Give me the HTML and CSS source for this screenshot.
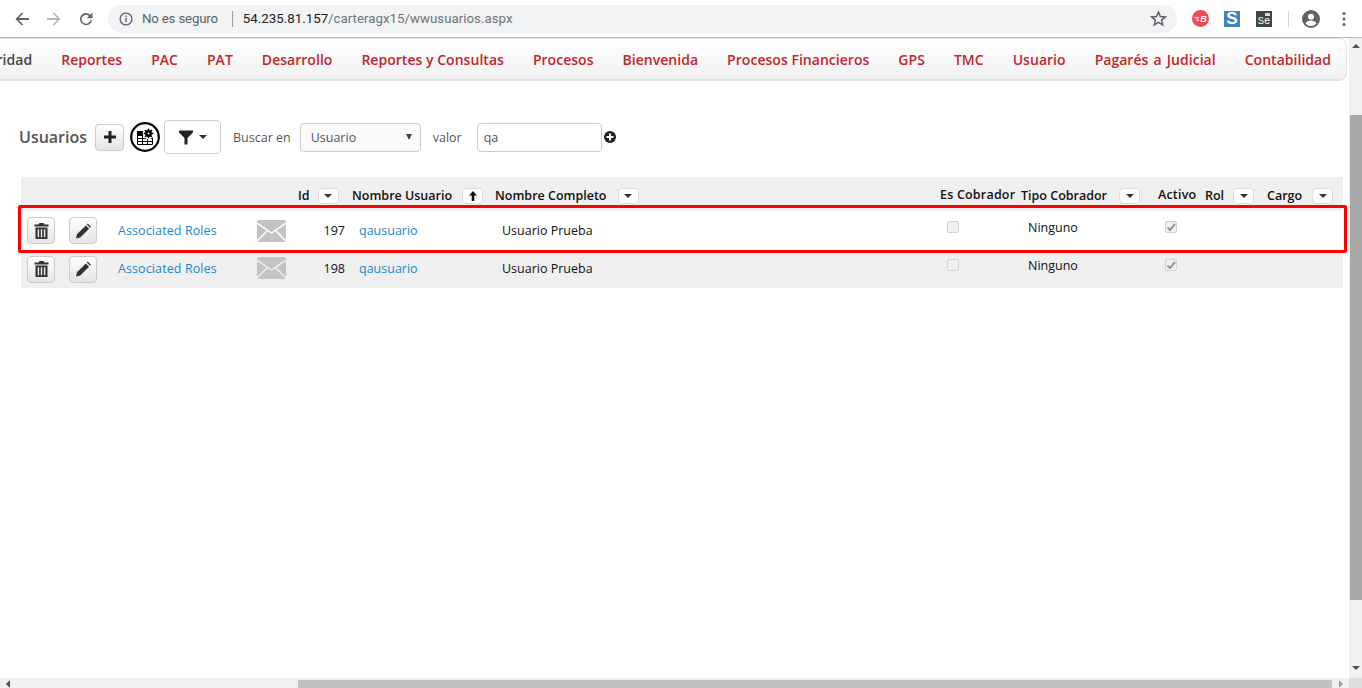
FILE: index.html
```html
<!DOCTYPE html>
<html lang="en">
<head>
  <meta charset="UTF-8" />
  <title>Usuarios</title>
  <link rel="stylesheet" href="styles.css">
</head>
<body>
  <header class="browser">
    <svg class="tool" viewBox="0 0 16 16"><path d="M15 7H4.800l4.400-4.400L8 1.400 1.400 8 8 14.600l1.200-1.200L4.800 9H15z" fill="#5f6368"/></svg>
    <svg class="tool" viewBox="0 0 16 16"><path d="M1 7h10.200L6.800 2.600 8 1.400 14.600 8 8 14.600l-1.200-1.200L11.200 9H1z" fill="#b4b6b9"/></svg>
    <svg class="tool" viewBox="0 0 16 16"><path d="M14.500 1.500v5.800H8.700l2.300-2.300A4.400 4.400 0 1 0 12.300 9.300h1.800A6.100 6.100 0 1 1 12.300 3.700z" fill="#5f6368"/></svg>
    <div class="omnibox">
      <svg class="info" viewBox="0 0 14 14"><circle cx="7" cy="7" r="5.900" fill="none" stroke="#5f6368" stroke-width="1.300"/><path d="M6.300 6h1.400v4.300H6.300zM6.300 3.500h1.400v1.400H6.300z" fill="#5f6368"/></svg>
      <span class="insecure">No es seguro</span>
      <span class="url"><b>54.235.81.157</b>/carteragx15/wwusuarios.aspx</span>
      <svg class="star" viewBox="0 0 16 16"><path d="M8 1.800l1.800 4.300 4.600.4-3.500 3 1.100 4.500L8 11.600 4 14l1.100-4.500-3.500-3 4.600-.4z" fill="none" stroke="#5f6368" stroke-width="1.400"/></svg>
    </div>
    <span class="ext ext-red"><svg class="wings" viewBox="0 0 6 6"><path d="M0 1h6M1.500 3h4.500M3 5h3" stroke="#fff" stroke-width="1"/></svg>B</span>
    <span class="ext ext-blue">S</span>
    <span class="ext ext-se">Se</span>
    <span class="sep"></span>
    <svg class="avatar" viewBox="0 0 18 18"><circle cx="9" cy="9" r="9" fill="#5f6368"/><circle cx="9" cy="6.800" r="3" fill="#fff"/><path d="M3.500 13.500c1-2.200 3.400-3 5.500-3s4.500.8 5.500 3A7 7 0 0 1 9 16a7 7 0 0 1-5.500-2.500z" fill="#fff"/></svg>
    <svg class="dots" viewBox="0 0 4 16"><circle cx="2" cy="2.500" r="1.500"/><circle cx="2" cy="8" r="1.500"/><circle cx="2" cy="13.500" r="1.500"/></svg>
  </header>

  <div class="viewport">
    <div class="page">
      <nav class="menu">
        <a class="dark">Seguridad</a>
        <a>Reportes</a>
        <a>PAC</a>
        <a>PAT</a>
        <a>Desarrollo</a>
        <a>Reportes y Consultas</a>
        <a>Procesos</a>
        <a>Bienvenida</a>
        <a>Procesos Financieros</a>
        <a>GPS</a>
        <a>TMC</a>
        <a>Usuario</a>
        <a class="wide-words">Pagarés a Judicial</a>
        <a>Contabilidad</a>
      </nav>

      <main class="content">
        <div class="toolbar">
          <h1>Usuarios</h1>
          <button class="btn add-btn" type="button">
            <svg viewBox="0 0 12 12"><path d="M4.500 0h3v4.500H12v3H7.500V12h-3V7.500H0v-3h4.500z" fill="#222"/></svg>
          </button>
          <svg class="grid-icon" viewBox="0 0 30 30">
            <circle cx="15" cy="15" r="13.800" fill="#fff" stroke="#000" stroke-width="2.200"/>
            <path d="M7.500 9.500h15v13h-15zM7.500 13.500h15M7.500 16.500h15M7.500 19.500h15M12.500 13.500v9M17.500 13.500v9" fill="none" stroke="#000" stroke-width="1"/>
            <path d="M7.500 9h9v4.500h-9z" fill="#000"/>
            <circle cx="18.500" cy="11.500" r="5.800" fill="#fff"/>
            <circle cx="18.500" cy="11.500" r="3.400" fill="#000"/>
            <path d="M18.500 6.700v9.600M13.700 11.500h9.600M15.100 8.100l6.800 6.800M21.900 8.100l-6.800 6.800" stroke="#000" stroke-width="1.500"/>
            <circle cx="18.500" cy="11.500" r="1" fill="#fff"/>
          </svg>
          <button class="filter-btn" type="button">
            <svg class="funnel" viewBox="0 0 14 14"><path d="M0 0h14v2L8.500 7.500V14h-3V7.500L0 2z" fill="#222"/></svg>
            <span class="caret"></span>
          </button>
          <label class="lbl buscar">Buscar en</label>
          <div class="select-box">
            <select class="field select-field"><option>Usuario</option></select>
            <span class="select-arrow"></span>
          </div>
          <label class="lbl valor">valor</label>
          <input class="field value-field" type="text" value="qa" />
          <svg class="plus-circle" viewBox="0 0 12 12"><circle cx="6" cy="6" r="6" fill="#222"/><path d="M5 2.500h2V5h2.500v2H7v2.500H5V7H2.500V5H5z" fill="#fff"/></svg>
        </div>

        <div class="grid-wrap">
          <table class="users">
            <colgroup>
              <col class="c1"><col class="c2"><col class="c3"><col class="c4"><col class="c5"><col class="c6">
              <col class="c7"><col class="c8"><col class="c9"><col class="c10"><col class="c11"><col class="c12">
            </colgroup>
            <thead>
              <tr>
                <th></th><th></th><th></th><th></th>
                <th>Id<button class="sort sort-id" type="button"><span class="caret"></span></button></th>
                <th>Nombre Usuario<button class="sort sort-user" type="button"><svg viewBox="0 0 8 10"><path d="M4 0l4 4.500H5.300V10H2.700V4.500H0z" fill="#111"/></svg></button></th>
                <th>Nombre Completo<button class="sort sort-full" type="button"><span class="caret"></span></button></th>
                <th class="raised">Es Cobrador</th>
                <th>Tipo Cobrador<button class="sort sort-tipo" type="button"><span class="caret"></span></button></th>
                <th class="raised">Activo</th>
                <th>Rol<button class="sort sort-rol" type="button"><span class="caret"></span></button></th>
                <th>Cargo<button class="sort sort-cargo" type="button"><span class="caret"></span></button></th>
              </tr>
            </thead>
            <tbody>
              <tr class="row-white">
                <td class="act"><button class="btn" type="button"><svg class="glyph" viewBox="0 0 14 16"><path d="M5 0h4l1 1.500h4v2H0v-2h4zM1 4.500h12V16H1zM3.200 6.200v8h1.400v-8zM6.300 6.200v8h1.400v-8zM9.400 6.200v8h1.400v-8z" fill="#333" fill-rule="evenodd"/></svg></button></td>
                <td class="act"><button class="btn" type="button"><svg class="glyph" viewBox="0 0 16 16"><path d="M0 16l1-4.500L10.500 2l3.500 3.500L4.500 15zM11.500 1l1-1 3.500 3.500-1 1z" fill="#333"/></svg></button></td>
                <td class="mid"><a class="link roles">Associated Roles</a></td>
                <td class="mid"><svg class="mail" viewBox="0 0 29 22"><rect width="29" height="22" rx="2" fill="#c4c2c3"/><path d="M0 3l14.500 10L29 3M0 21l10-10M29 21L19 11" fill="none" stroke="#fff" stroke-width="1.500"/></svg></td>
                <td class="mid num">197</td>
                <td class="mid"><a class="link">qausuario</a></td>
                <td class="mid">Usuario Prueba</td>
                <td class="top"><span class="check"></span></td>
                <td class="top">Ninguno</td>
                <td class="top"><span class="check on"><svg viewBox="0 0 10 10"><path d="M1.500 5.500l2.500 2.500 5-6" fill="none" stroke="#999" stroke-width="2"/></svg></span></td>
                <td></td><td></td>
              </tr>
              <tr class="row-grey">
                <td class="act"><button class="btn" type="button"><svg class="glyph" viewBox="0 0 14 16"><path d="M5 0h4l1 1.500h4v2H0v-2h4zM1 4.500h12V16H1zM3.200 6.200v8h1.400v-8zM6.300 6.200v8h1.400v-8zM9.400 6.200v8h1.400v-8z" fill="#333" fill-rule="evenodd"/></svg></button></td>
                <td class="act"><button class="btn" type="button"><svg class="glyph" viewBox="0 0 16 16"><path d="M0 16l1-4.500L10.500 2l3.500 3.500L4.500 15zM11.500 1l1-1 3.500 3.500-1 1z" fill="#333"/></svg></button></td>
                <td class="mid"><a class="link roles">Associated Roles</a></td>
                <td class="mid"><svg class="mail" viewBox="0 0 29 22"><rect width="29" height="22" rx="2" fill="#c4c2c3"/><path d="M0 3l14.500 10L29 3M0 21l10-10M29 21L19 11" fill="none" stroke="#efefef" stroke-width="1.500"/></svg></td>
                <td class="mid num">198</td>
                <td class="mid"><a class="link">qausuario</a></td>
                <td class="mid">Usuario Prueba</td>
                <td class="top"><span class="check"></span></td>
                <td class="top">Ninguno</td>
                <td class="top"><span class="check on"><svg viewBox="0 0 10 10"><path d="M1.500 5.500l2.500 2.500 5-6" fill="none" stroke="#999" stroke-width="2"/></svg></span></td>
                <td></td><td></td>
              </tr>
            </tbody>
          </table>
          <div class="highlight"></div>
        </div>
      </main>
    </div>

    <div class="vbar">
      <span class="arrow-up"></span>
      <span class="vthumb"></span>
      <span class="arrow-down"></span>
    </div>
    <div class="hbar">
      <span class="arrow-left"></span>
      <span class="hthumb"></span>
      <span class="arrow-right"></span>
    </div>
    <div class="corner"></div>
  </div>
</body>
</html>
```

FILE: styles.css
```css
* {
  box-sizing: border-box;
}
html, body {
  margin: 0;
  height: 688px;
  overflow: hidden;
}
body {
  font-family: "Open Sans", "Liberation Sans", sans-serif;
  font-size: 12.500px;
  color: #222;
  background: #fff;
  display: flex;
  flex-direction: column;
}

/* browser chrome */
.browser {
  height: 38px;
  flex: none;
  display: flex;
  align-items: center;
  padding: 0 0 0 14px;
  border-bottom: 1px solid #b8b8b8;
  background: #fff;
}
.tool {
  width: 16px;
  height: 16px;
  margin-right: 16px;
  flex: none;
}
.tool:nth-child(3) {
  margin-right: 14px;
}
.omnibox {
  width: 1069px;
  height: 28px;
  border-radius: 14px;
  background: #f1f3f4;
  display: flex;
  align-items: center;
  padding: 0 10px 0 11px;
  font-family: "Roboto", sans-serif;
  font-size: 13.300px;
  flex: none;
}
.info {
  width: 14px;
  height: 14px;
  margin-right: 9px;
}
.insecure {
  color: #5f6368;
  padding-right: 14px;
  letter-spacing: -.2px;
  border-right: 1px solid #9a9da1;
  line-height: 16px;
}
.url {
  color: #70757a;
  margin-left: 10px;
  flex: 1;
}
.url b {
  font-weight: 400;
  color: #202124;
}
.star {
  width: 17px;
  height: 17px;
}
.ext {
  width: 16px;
  height: 16px;
  flex: none;
  display: flex;
  align-items: center;
  justify-content: center;
  font-family: "Liberation Sans", sans-serif;
  font-weight: 700;
}
.ext-red {
  margin-left: 15px;
  width: 17px;
  height: 17px;
  border-radius: 50%;
  background: #ea4a50;
  color: #fff;
  font-size: 9px;
  font-style: italic;
  gap: 1px;
}
.wings {
  width: 5px;
  height: 6px;
}
.ext-blue {
  margin-left: 15px;
  background: #3d85c0;
  color: #fff;
  font-size: 17px;
  line-height: 16px;
}
.ext-se {
  position: relative;
  margin-left: 16px;
  background: #444;
  color: #fff;
  font-size: 10.500px;
  padding-top: 4px;
  font-family: "Liberation Mono", monospace;
  font-weight: 400;
}
.ext-se::after {
  content: "";
  position: absolute;
  right: 2px;
  top: 2px;
  width: 5px;
  height: 3px;
  background: #ddd;
}
.sep {
  width: 1px;
  height: 16px;
  background: #d3d5d7;
  margin: 0 13px 0 16px;
}
.avatar {
  width: 18px;
  height: 18px;
  flex: none;
}
.dots {
  width: 4px;
  height: 16px;
  margin-left: 22px;
  fill: #5f6368;
}

/* page frame with scrollbars */
.viewport {
  flex: 1;
  min-height: 0;
  display: grid;
  grid-template-columns: 1fr 13px;
  grid-template-rows: 1fr 10px;
  background: #fff;
}
.page {
  overflow: hidden;
  min-width: 0;
}
.vbar {
  background: #f1f1f1;
  display: flex;
  flex-direction: column;
  align-items: center;
  padding-top: 6px;
}
.vthumb {
  width: 12px;
  margin: 67px 0 0 1px;
  height: 485px;
  flex: none;
  background: #a8a8a8;
}
.arrow-up {
  border: 4px solid transparent;
  border-top: 0;
  border-bottom: 4px solid #505050;
}
.arrow-down {
  margin-top: 66px;
  border: 4px solid transparent;
  border-bottom: 0;
  border-top: 4px solid #505050;
}
.hbar {
  background: #f1f1f1;
  display: flex;
  align-items: flex-end;
  height: 10px;
  padding-left: 6px;
}
.hthumb {
  width: 1034px;
  height: 8px;
  margin-left: 288px;
  background: #c1c1c1;
}
.arrow-left {
  border: 4px solid transparent;
  border-left: 0;
  border-right: 4px solid #505050;
}
.arrow-right {
  margin-left: 7px;
  border: 4px solid transparent;
  border-right: 0;
  border-left: 4px solid #a0a0a0;
}
.corner {
  background: #dcdcdc;
}

/* top menu */
.menu {
  height: 43px;
  width: 1347px;
  display: flex;
  justify-content: flex-end;
  align-items: center;
  gap: 29px;
  padding: 0 15px 0 0;
  overflow: hidden;
  border: 1px solid #e3e3e3;
  border-bottom-width: 2px;
  border-left: 0;
  border-radius: 0 8px 8px 0;
  background: linear-gradient(#fff, #f1f1f1);
  font-size: 14px;
  letter-spacing: .03px;
  font-weight: 600;
  white-space: nowrap;
}
.menu a {
  color: #c0272d;
  flex: none;
}
.menu a.dark {
  color: #444;
}
.menu a.wide-words {
  word-spacing: 1.500px;
}

/* toolbar */
.content {
  padding: 39px 0 0 19px;
}
.toolbar {
  display: flex;
  align-items: center;
  height: 34px;
}
h1 {
  margin: 0;
  font-size: 16px;
  font-weight: 600;
  color: #555;
  width: 76px;
}
.btn {
  width: 29px;
  height: 27px;
  padding: 0;
  border: 1px solid #ccc;
  border-radius: 4px;
  background: linear-gradient(#fff, #e4e4e4);
  display: inline-flex;
  align-items: center;
  justify-content: center;
}
.add-btn svg {
  width: 12px;
  height: 12px;
}
.grid-icon {
  width: 30px;
  height: 30px;
  margin-left: 6px;
  flex: none;
}
.filter-btn {
  width: 57px;
  height: 34px;
  margin-left: 4px;
  padding: 0;
  border: 1px solid #ccc;
  border-radius: 4px;
  background: #fff;
  display: flex;
  align-items: center;
  justify-content: center;
  gap: 6px;
}
.funnel {
  width: 14px;
  height: 15px;
}
.caret {
  display: inline-block;
  border: 4px solid transparent;
  border-bottom: 0;
  border-top: 4px solid #333;
}
.lbl {
  color: #555;
}
.buscar {
  margin-left: 12px;
}
.valor {
  margin-left: 12px;
}
.field {
  height: 29px;
  border: 1px solid #ccc;
  border-radius: 4px;
  font-family: inherit;
  font-size: 12.500px;
  color: #555;
}
.select-box {
  position: relative;
  margin-left: 9px;
  width: 121px;
  height: 29px;
}
.select-field {
  width: 100%;
  appearance: none;
  background: #fafafa;
  padding: 0 0 0 10px;
}
.select-arrow {
  position: absolute;
  right: 9px;
  top: 11px;
  border: 3px solid transparent;
  border-bottom: 0;
  border-top: 6px solid #444;
}
.value-field {
  width: 125px;
  margin-left: 15px;
  padding: 0 6px;
  background: #fff;
}
.plus-circle {
  width: 12px;
  height: 12px;
  margin-left: 2px;
}

/* users grid */
.grid-wrap {
  position: relative;
  margin: 23px 0 0 2px;
  width: 1322px;
}
.users {
  width: 1322px;
  table-layout: fixed;
  border-collapse: collapse;
}
.c1 { width: 41px; }
.c2 { width: 42px; }
.c3 { width: 139px; }
.c4 { width: 48px; }
.c5 { width: 54px; }
.c6 { width: 143px; }
.c7 { width: 445px; }
.c8 { width: 81px; }
.c9 { width: 137px; }
.c10 { width: 47px; }
.c11 { width: 62px; }
.c12 { width: 83px; }
th {
  height: 34px;
  padding: 3px 0 0 7px;
  background: #efefef;
  text-align: left;
  font-weight: 600;
  color: #111;
  white-space: nowrap;
}
th.raised {
  padding-top: 1px;
  letter-spacing: .2px;
}
.sort {
  width: 21px;
  height: 16px;
  padding: 0;
  border: 1px solid #ddd;
  border-radius: 4px;
  background: #fff;
  display: inline-flex;
  align-items: center;
  justify-content: center;
  vertical-align: middle;
}
.sort svg {
  width: 8px;
  height: 10px;
}
.sort-id { margin-left: 8px; }
.sort-user { margin-left: 10px; }
.sort-full { margin-left: 11px; }
.sort-tipo { margin-left: 12px; }
.sort-rol { margin-left: 9px; }
.sort-cargo { margin-left: 10px; }
td {
  padding: 0 0 0 14px;
  color: #111;
  white-space: nowrap;
}
.row-white td {
  height: 39px;
  background: #fff;
}
.row-grey td {
  height: 38px;
  background: #efefef;
}
.row-grey td.mid {
  padding-bottom: 2px;
}
.row-grey td.top {
  padding-top: 7px;
}
td.act {
  padding-left: 6px;
}
td.act + td.act {
  padding-left: 7px;
}
td.act .btn {
  width: 28px;
}
td.mid {
  vertical-align: middle;
}
td.top {
  vertical-align: top;
  padding-top: 8px;
}
td.num {
  text-align: right;
  padding-right: 0;
}
.link {
  color: #1a88c9;
}
.link.roles {
  letter-spacing: .1px;
}
.glyph {
  width: 15px;
  height: 16px;
}
.mail {
  width: 29px;
  height: 22px;
  display: block;
}
.check {
  display: block;
  width: 12px;
  height: 12px;
  margin-top: 2px;
  border: 1px solid #d2d2d2;
  border-radius: 2px;
  background: #f0f0f0;
}
.check svg {
  display: block;
  width: 10px;
  height: 10px;
}

/* red annotation around the first row */
.highlight {
  position: absolute;
  left: -3px;
  top: 28px;
  width: 1329px;
  height: 48px;
  border: 3px solid #f00;
  border-radius: 2px;
}
```
